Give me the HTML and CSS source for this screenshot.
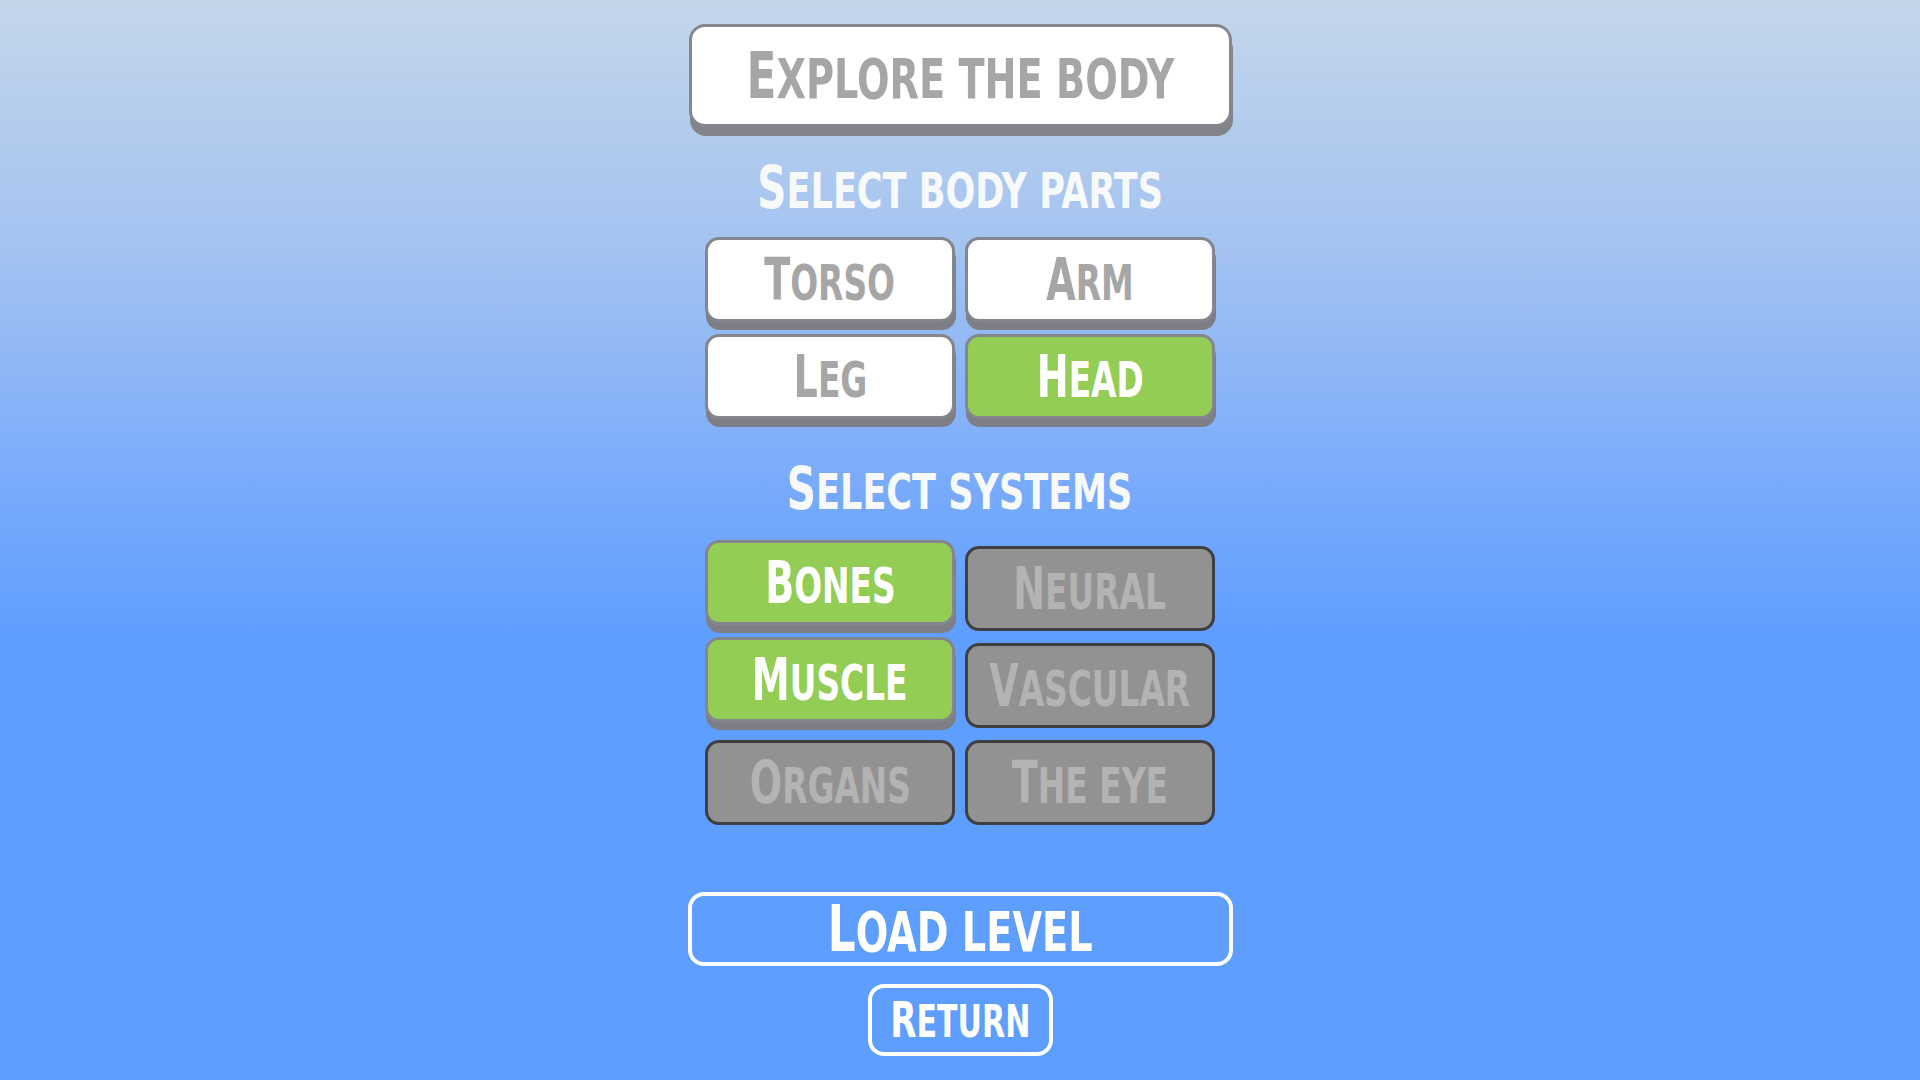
FILE: index.html
```html
<!DOCTYPE html>
<html lang="en">
<head>
<meta charset="utf-8">
<title>Explore the body</title>
<link rel="stylesheet" href="styles.css">
</head>
<body>
<main class="menu">
  <div class="title-card"><span class="label">Explore the body</span></div>

  <h2 class="heading heading-parts"><span class="label">Select body parts</span></h2>
  <div class="grid">
    <button class="opt light"><span class="label">Torso</span></button>
    <button class="opt light"><span class="label">Arm</span></button>
    <button class="opt light"><span class="label">Leg</span></button>
    <button class="opt on"><span class="label">Head</span></button>
  </div>

  <h2 class="heading heading-systems"><span class="label">Select systems</span></h2>
  <div class="grid">
    <button class="opt on"><span class="label">Bones</span></button>
    <button class="opt off"><span class="label">Neural</span></button>
    <button class="opt on"><span class="label">Muscle</span></button>
    <button class="opt off"><span class="label">Vascular</span></button>
    <button class="opt off"><span class="label">Organs</span></button>
    <button class="opt off"><span class="label">The eye</span></button>
  </div>

  <button class="outline-btn load"><span class="label">Load level</span></button>
  <button class="outline-btn back"><span class="label">Return</span></button>
</main>
</body>
</html>
```

FILE: styles.css
```css
html, body {
  margin: 0;
  height: 100%;
}

body {
  background: linear-gradient(to bottom, #c4d6ea 0px, #a3c3f1 250px, #7aabfb 480px, #5e9eff 640px, #5e9eff 100%);
  font-family: "Liberation Sans Narrow", "DejaVu Sans Condensed", "Liberation Sans", sans-serif;
  font-weight: bold;
  overflow: hidden;
}

.menu {
  width: 543px;
  margin: 0 auto;
  padding-top: 24px;
  display: flex;
  flex-direction: column;
  align-items: center;
}

.label {
  display: inline-block;
  text-transform: uppercase;
  line-height: 1;
  white-space: nowrap;
  transform: scaleX(0.76);
}

.title-card {
  box-sizing: border-box;
  width: 543px;
  height: 103px;
  background: #ffffff;
  border: 3px solid #86868e;
  border-radius: 16px;
  box-shadow: 1px 9px 0 0 #83838b;
  display: flex;
  align-items: center;
  justify-content: center;
  color: #a6a6a6;
  font-size: 56px;
}

.title-card .label::first-letter {
  font-size: 64px;
}

.heading {
  margin: 0;
  box-sizing: border-box;
  display: flex;
  align-items: center;
  justify-content: center;
  color: #f8f9fb;
  font-size: 50px;
  font-weight: bold;
}

.heading .label {
  transform: scaleX(0.78);
}

.heading .label::first-letter {
  font-size: 58px;
}

.heading-parts {
  height: 110px;
  padding-top: 12px;
}

.heading-systems {
  height: 121px;
  padding-top: 18px;
}

.grid {
  display: grid;
  grid-template-columns: 250px 250px;
  column-gap: 10px;
  row-gap: 12px;
}

.opt {
  box-sizing: border-box;
  height: 85px;
  border-radius: 14px;
  border: 3px solid #85858d;
  padding: 0;
  font-family: inherit;
  font-weight: bold;
  font-size: 50px;
  display: flex;
  align-items: center;
  justify-content: center;
  cursor: pointer;
}

.opt .label {
  transform: scaleX(0.73);
}

.opt .label::first-letter {
  font-size: 58px;
}

.opt.light {
  background: #ffffff;
  color: #a6a6a6;
  box-shadow: 1px 8px 0 0 #7e7e87;
}

.opt.on {
  background: #93cd55;
  color: #ffffff;
  box-shadow: 1px 8px 0 0 #7e7e87;
}

.opt.off {
  background: #929292;
  border-color: #3f3f42;
  color: #b3b3b3;
  transform: translateY(6px);
}

.outline-btn {
  box-sizing: border-box;
  background: transparent;
  border: 4px solid #ffffff;
  color: #ffffff;
  padding: 0;
  font-family: inherit;
  font-weight: bold;
  display: flex;
  align-items: center;
  justify-content: center;
  cursor: pointer;
}

.outline-btn.load {
  width: 545px;
  height: 74px;
  margin-top: 73px;
  border-radius: 16px;
  font-size: 56px;
}

.outline-btn.load .label::first-letter {
  font-size: 64px;
}

.outline-btn.back {
  width: 185px;
  height: 72px;
  margin-top: 18px;
  border-radius: 16px;
  font-size: 44px;
}

.outline-btn.back .label::first-letter {
  font-size: 50px;
}
```
